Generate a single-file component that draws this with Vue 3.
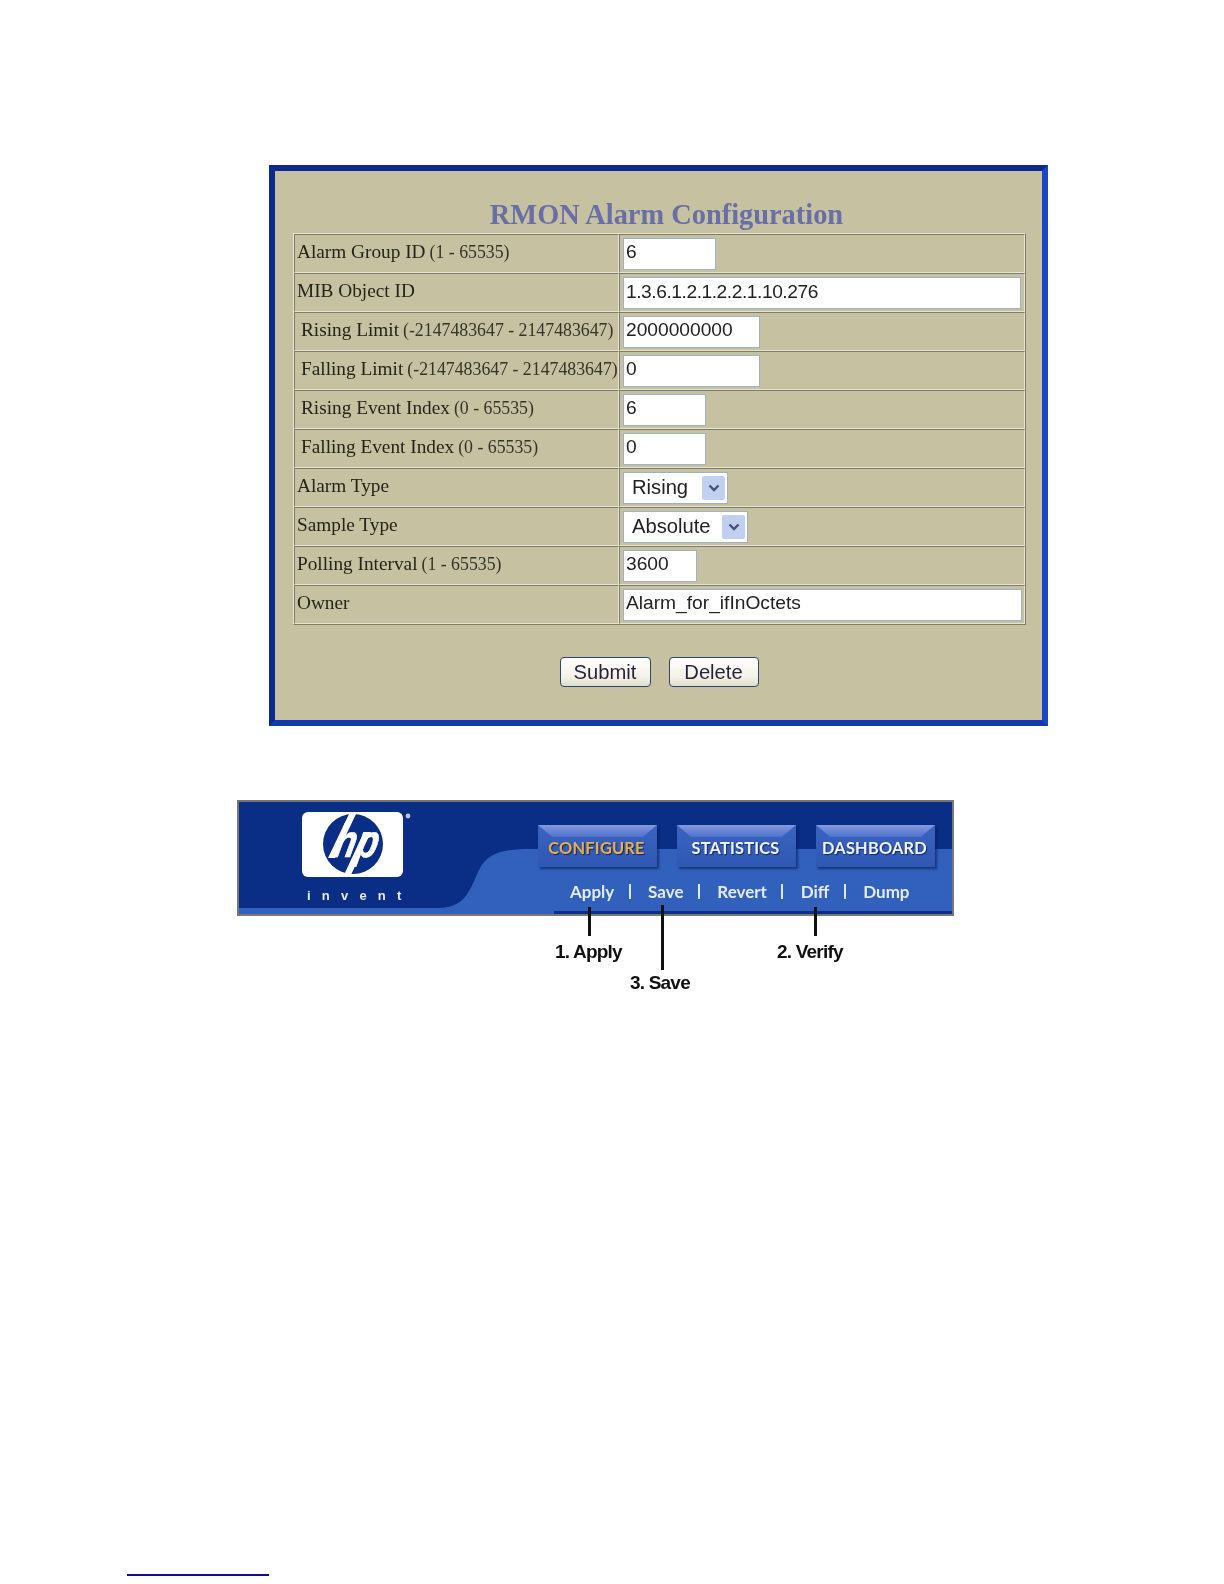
<script setup>
const rows = [
  { label: 'Alarm Group ID', range: '(1 - 65535)', value: '6', width: 93 },
  { label: 'MIB Object ID', value: '1.3.6.1.2.1.2.2.1.10.276', width: 398, compact: true },
  { label: 'Rising Limit', range: '(-2147483647 - 2147483647)', value: '2000000000', width: 137, indent: true },
  { label: 'Falling Limit', range: '(-2147483647 - 2147483647)', value: '0', width: 137, indent: true },
  { label: 'Rising Event Index', range: '(0 - 65535)', value: '6', width: 83, indent: true },
  { label: 'Falling Event Index', range: '(0 - 65535)', value: '0', width: 83, indent: true },
  { label: 'Alarm Type', value: 'Rising', width: 105, select: true },
  { label: 'Sample Type', value: 'Absolute', width: 125, select: true },
  { label: 'Polling Interval', range: '(1 - 65535)', value: '3600', width: 74 },
  { label: 'Owner', value: 'Alarm_for_ifInOctets', width: 399 },
]
const tabs = [
  { name: 'CONFIGURE', active: true },
  { name: 'STATISTICS' },
  { name: 'DASHBOARD' },
]
const links = ['Apply', 'Save', 'Revert', 'Diff', 'Dump']
const callouts = [
  { text: '1. Apply', lineX: 349, lineTop: 105, lineH: 29, textX: 316, textY: 139 },
  { text: '3. Save', lineX: 422, lineTop: 103, lineH: 65, textX: 391, textY: 170 },
  { text: '2. Verify', lineX: 575, lineTop: 105, lineH: 29, textX: 538, textY: 139 },
]
</script>

<template>
  <main class="page">
    <section class="panel">
      <h2 class="title">RMON Alarm Configuration</h2>
      <div class="table">
        <div v-for="row in rows" :key="row.label" class="row">
          <div class="label" :class="{ indent: row.indent }">
            <span>{{ row.label }}</span>
            <span v-if="row.range" class="range">{{ row.range }}</span>
          </div>
          <div class="cell">
            <div v-if="row.select" class="select" :style="{ width: row.width + 'px' }">
              <span>{{ row.value }}</span>
              <span class="arrow">
                <svg width="12" height="8" viewBox="0 0 12 8">
                  <path d="M1.5 1.5 L6 6 L10.5 1.5" fill="none" stroke="#44527c" stroke-width="2.4" />
                </svg>
              </span>
            </div>
            <div v-else class="field" :class="{ compact: row.compact }" :style="{ width: row.width + 'px' }">{{ row.value }}</div>
          </div>
        </div>
      </div>
      <div class="actions">
        <button class="btn submit" type="button">Submit</button>
        <button class="btn" type="button">Delete</button>
      </div>
    </section>

    <section class="banner">
      <svg class="backdrop" width="713" height="112" viewBox="0 0 713 112" preserveAspectRatio="none">
        <rect width="713" height="112" fill="#0a2d85" />
        <path d="M0 106 H200 C228 106 232 84 240 68 C248 52 262 47 290 47 H713 V112 H0 Z" fill="#3160bd" />
        <path d="M315 109 H713 V112 H315 Z" fill="#0c2f86" />
      </svg>
      <div class="brand">
        <svg width="112" height="66" viewBox="0 0 112 66">
          <rect x="0" y="0" width="101" height="65" rx="6" fill="#fff" />
          <circle cx="51" cy="32" r="30" fill="#0a2d85" />
          <polygon points="48,0 55,0 33,46 26,46" fill="#fff" />
          <polygon points="62,20 69,20 48,65 41,65" fill="#fff" />
          <text class="hp" x="30" y="45" textLength="44" lengthAdjust="spacingAndGlyphs" transform="translate(9.6 0) skewX(-12)">hp</text>
          <circle cx="106" cy="4" r="2.4" fill="#b9c6e6" />
        </svg>
        <div class="invent">invent</div>
      </div>
      <nav class="nav">
        <div class="tabs">
          <div v-for="tab in tabs" :key="tab.name" class="tab" :class="{ active: tab.active }">{{ tab.name }}</div>
        </div>
        <div class="links">
          <template v-for="(link, i) in links" :key="link">
            <span v-if="i" class="sep"></span>
            <span class="link">{{ link }}</span>
          </template>
        </div>
      </nav>
      <template v-for="c in callouts" :key="c.text">
        <span class="line" :style="{ left: c.lineX + 'px', top: c.lineTop + 'px', height: c.lineH + 'px' }"></span>
        <span class="callout" :style="{ left: c.textX + 'px', top: c.textY + 'px' }">{{ c.text }}</span>
      </template>
    </section>

    <div class="rule"></div>
  </main>
</template>

<style scoped>
.page {
  position: relative;
  width: 1224px;
  height: 1584px;
  overflow: hidden;
  box-sizing: border-box;
  padding-top: 165px;
  background: #fff;
  filter: blur(0.4px);
}
.panel {
  box-sizing: border-box;
  width: 779px;
  height: 561px;
  margin-left: 269px;
  padding: 29px 17px 0 18px;
  background: #c5c1a1;
  border: 6px solid;
  border-color: #0b2a8c #1c46c4 #1238b4 #0b2a8c;
}
.title {
  margin: 0;
  height: 33px;
  text-align: center;
  font: bold 28.4px/30px "Liberation Serif", serif;
  color: #6a6ea6;
  padding-left: 15px;
}
.table {
  border: 1px solid;
  border-color: #e4e3d4 #7e7c68 #7e7c68 #e4e3d4;
  width: 733px;
  box-sizing: border-box;
}
.row {
  display: grid;
  grid-template-columns: 325px 1fr;
  height: 39px;
}
.label,
.cell {
  box-sizing: border-box;
  display: flex;
  align-items: center;
  border: 1px solid;
  border-color: #7e7c68 #e4e3d4 #e4e3d4 #7e7c68;
}
.label {
  gap: 4px;
  padding: 0 0 3px 2px;
  font: 19.3px "Liberation Serif", serif;
  color: #24241a;
  white-space: nowrap;
}
.label.indent {
  padding-left: 6px;
}
.range {
  font-size: 17.8px;
  color: #34342a;
}
.cell {
  padding: 0 0 0 3px;
}
.field,
.select {
  box-sizing: border-box;
  height: 32px;
  background: #fff;
  border: 1px solid #9db2c4;
  color: #222;
}
.field {
  padding: 2px 0 0 2px;
  font: 19.2px "Liberation Sans", sans-serif;
}
.field.compact {
  padding-top: 3px;
  letter-spacing: -0.45px;
}
.select {
  display: flex;
  align-items: center;
  justify-content: space-between;
  padding: 0 2px 0 8px;
  font: 20.2px "Liberation Sans", sans-serif;
}
.arrow {
  display: flex;
  align-items: center;
  justify-content: center;
  width: 23px;
  height: 24px;
  background: #c1cff0;
  border-radius: 2px;
}
.actions {
  display: flex;
  justify-content: center;
  gap: 18px;
  margin-top: 32px;
}
.btn {
  box-sizing: border-box;
  width: 90px;
  height: 30px;
  padding: 0;
  border: 1.5px solid #2b4a68;
  border-radius: 4px;
  background: linear-gradient(#ffffff, #f3f1e6 70%, #dfdccb);
  font: 20.2px "Liberation Sans", sans-serif;
  color: #2a1f3a;
}
.submit {
  width: 91px;
}
.banner {
  position: relative;
  box-sizing: border-box;
  display: flex;
  width: 717px;
  height: 116px;
  margin: 74px 0 0 237px;
  border: 2px solid #777;
}
.backdrop {
  position: absolute;
  inset: 0;
}
.brand {
  position: relative;
  width: 112px;
  margin: 10px 0 0 63px;
}
.brand svg {
  display: block;
}
.hp {
  font: italic bold 46px "Liberation Sans", sans-serif;
  fill: #fff;
  stroke: #fff;
  stroke-width: 0.7px;
}
.invent {
  margin: 10px 0 0 5px;
  font: bold 13px "Liberation Sans", sans-serif;
  letter-spacing: 11.2px;
  color: #e8ecf6;
  white-space: nowrap;
}
.nav {
  position: relative;
  margin: 23px 0 0 124px;
}
.tabs {
  display: flex;
  gap: 20px;
}
.tab {
  position: relative;
  box-sizing: border-box;
  width: 119px;
  height: 42px;
  padding: 3px 2px 0 0;
  display: flex;
  align-items: center;
  justify-content: center;
  background: linear-gradient(#3b64c2, #2f58b4);
  box-shadow: 2px 2px 2px rgba(10, 30, 90, 0.65);
  font: bold 16.4px "Lato", sans-serif;
  letter-spacing: 0.2px;
  color: #f1f3fa;
  text-shadow: 1px 1px 1px #12296e;
  white-space: nowrap;
}
.tab::before {
  content: "";
  position: absolute;
  left: 0;
  right: 0;
  top: 0;
  height: 12px;
  background: linear-gradient(#8598de, #4d72cc);
  clip-path: polygon(0 0, 100% 0, 88% 100%, 12% 100%);
}
.tab.active {
  color: #e8b04a;
  text-shadow: 1px 1px 1px #14245e;
}
.links {
  display: flex;
  align-items: center;
  gap: 15.9px;
  margin: 14px 0 0 32px;
}
.link {
  font: bold 17px "Lato", sans-serif;
  color: #e6ebf8;
  white-space: nowrap;
}
.sep {
  width: 2px;
  height: 15px;
  margin: 0 1.5px 0 -1.5px;
  background: #dfe6f6;
}
.line {
  position: absolute;
  width: 3px;
  background: #111;
}
.callout {
  position: absolute;
  font: bold 19px "Liberation Sans", sans-serif;
  letter-spacing: -0.8px;
  color: #111;
  white-space: nowrap;
}
.rule {
  position: absolute;
  left: 127px;
  top: 1574px;
  width: 142px;
  height: 2px;
  background: #0d0d8a;
}
</style>
